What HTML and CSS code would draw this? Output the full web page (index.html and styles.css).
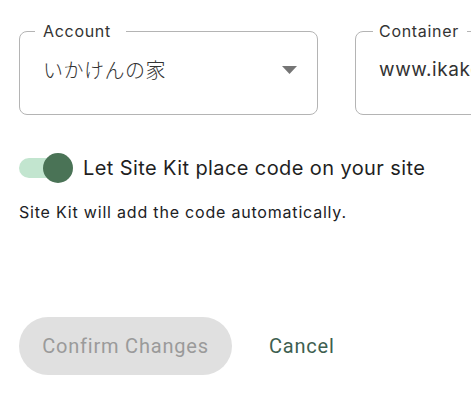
FILE: index.html
```html
<html>
  <head>
    <title>Site Kit - Tag Manager</title>
    <link rel="stylesheet" href="styles.css">
  </head>
  <body>
    <div class=page>
      <div class=fields>
        <fieldset class=field>
          <legend class=label>Account</legend>
          <div class=value>いかけんの家</div>
          <svg class=arrow width="15" height="8" viewBox="0 0 15 8"><path d="M0 0 H15 L7.5 8 Z" fill="#757575"/></svg>
        </fieldset>
        <fieldset class="field container">
          <legend class=label>Container</legend>
          <div class=value>www.ikakenhouse.com</div>
        </fieldset>
      </div>

      <div class=switchrow>
        <div class=switch>
          <div class=track></div>
          <div class=thumb></div>
        </div>
        <div class=switchlabel>Let Site Kit place code on your site</div>
      </div>
      <div class=note>Site Kit will add the code automatically.</div>

      <div class=actions>
        <button class=confirm disabled>Confirm Changes</button>
        <a href='' class=cancel>Cancel</a>
      </div>
    </div>
  </body>
</html>
```

FILE: styles.css
```css
body {
  margin: 0px;
  padding: 0px;
  overflow: hidden;
  background: #ffffff;
  font-family: Inter, "Noto Sans CJK JP", sans-serif;
  color: #202124;
}

.page { padding: 23px 0 0 19px; }

.fields { display: flex; gap: 37px; width: 700px; }

.field {
  margin: 0;
  width: 299px;
  height: 92px;
  box-sizing: border-box;
  border: 1px solid #b4b4b4;
  border-radius: 8px;
  padding: 0 20px 0 23px;
  display: flex;
  align-items: center;
  justify-content: space-between;
}
.field.container { width: 320px; padding-left: 23px; }

.label {
  font-size: 16px;
  letter-spacing: 0.7px;
  color: #333333;
  padding: 0 15px 0 8px;
  margin-left: -8px;
  line-height: 16px;
}
.container .label { padding: 0 8px 0 6px; margin-left: -6px; }

.value {
  font-size: 20px;
  letter-spacing: 0.5px;
  color: #333333;
  margin-top: -14px;
  white-space: nowrap;
}
.field .value { font-family: "Noto Sans CJK JP", sans-serif; font-weight: 300; }
.container .value { font-family: Inter, sans-serif; font-weight: 400; font-size: 19px; letter-spacing: 0.6px; }

.arrow { margin-top: -14px; }

.switchrow { display: flex; align-items: center; gap: 10px; margin-top: 38px; }

.switch { position: relative; width: 54px; height: 30px; }
.track { position: absolute; left: 0; top: 5px; width: 50px; height: 20px; border-radius: 10px; background: #c2e5cf; }
.thumb { position: absolute; right: 0; top: 0; width: 30px; height: 30px; border-radius: 50%; background: #4a7356; }

.switchlabel { font-size: 20px; letter-spacing: 0.4px; color: #1f1f1f; }

.note { font-size: 16px; letter-spacing: 0.8px; line-height: 19px; margin-top: 20px; color: #202124; }

.actions { display: flex; align-items: center; gap: 37px; margin-top: 95px; }

.confirm {
  font-family: Roboto, sans-serif;
  font-size: 20px;
  letter-spacing: 0.8px;
  height: 58px;
  width: 213px;
  border: 0;
  border-radius: 29px;
  background: #e0e0e0;
  color: #9a9a9a;
  padding: 0;
}

a.cancel:link, a.cancel:visited { font-family: Roboto, sans-serif; font-size: 20px; letter-spacing: 0.8px; color: #3e5f50; text-decoration: none; }
```
